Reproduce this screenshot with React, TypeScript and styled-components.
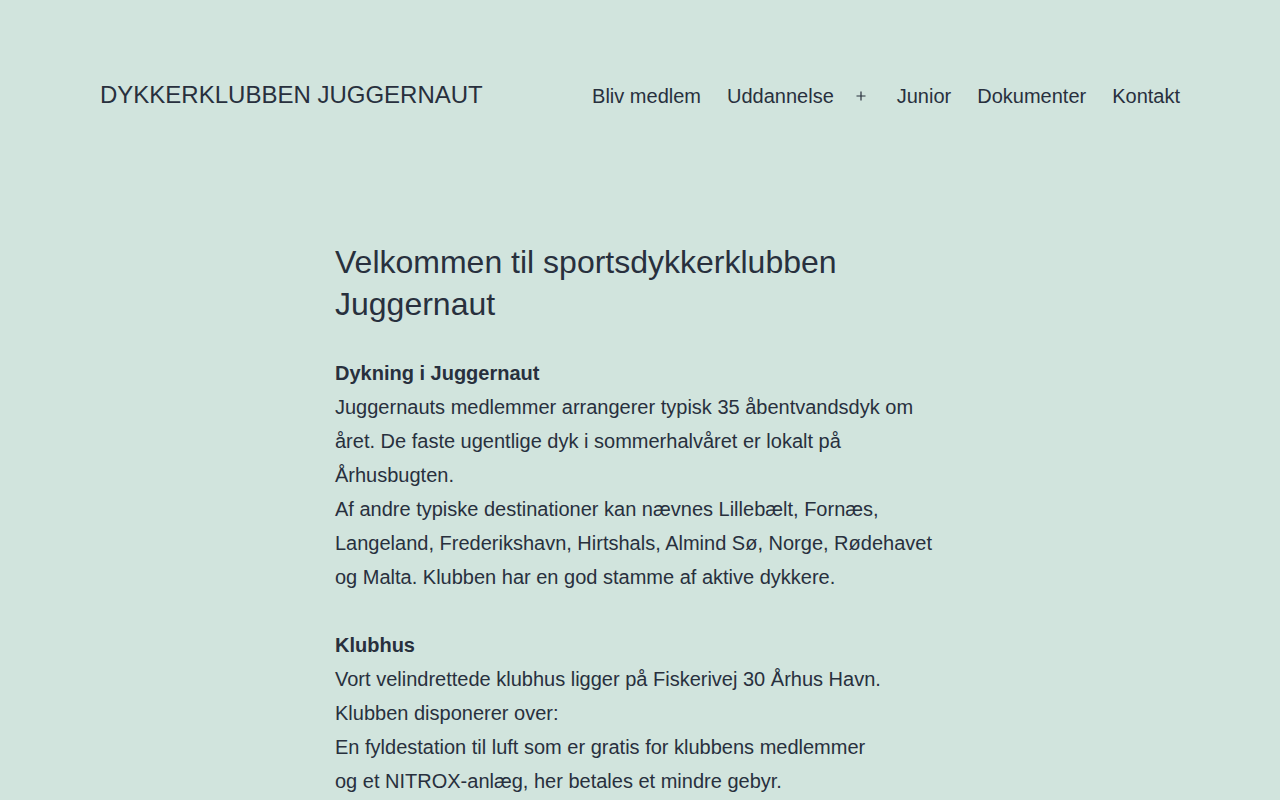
import styled, { createGlobalStyle } from "styled-components";

const GlobalStyle = createGlobalStyle`
  html, body {
    margin: 0;
    padding: 0;
    background-color: #d1e4dd;
  }
  body {
    color: #28303d;
    font-family: "Liberation Sans", Arial, sans-serif;
    -webkit-font-smoothing: antialiased;
  }
`;

const menu = ["Bliv medlem", "Uddannelse", "Junior", "Dokumenter", "Kontakt"];

function App() {
  return (
    <Site>
      <GlobalStyle />
      <Header>
        <SiteTitle>Dykkerklubben Juggernaut</SiteTitle>
        <Nav>
          <MenuList>
            {menu.map((item) => (
              <MenuItem key={item}>
                <MenuLink href="#">{item}</MenuLink>
                {item === "Uddannelse" && (
                  <SubToggle aria-label="Åbn menu">
                    <svg width="10" height="10" viewBox="0 0 10 10">
                      <path d="M5 0.5v9M0.5 5h9" stroke="#28303d" strokeWidth="1.2" fill="none" />
                    </svg>
                  </SubToggle>
                )}
              </MenuItem>
            ))}
          </MenuList>
        </Nav>
      </Header>

      <Main>
        <Title>Velkommen til sportsdykkerklubben Juggernaut</Title>
        <Text>
          <strong>Dykning i Juggernaut</strong>
          <br />
          Juggernauts medlemmer arrangerer typisk 35 åbentvandsdyk om året. De faste ugentlige dyk i
          sommerhalvåret er lokalt på Århusbugten.
          <br />
          Af andre typiske destinationer kan nævnes Lillebælt, Fornæs, Langeland, Frederikshavn,
          Hirtshals, Almind Sø, Norge, Rødehavet og Malta. Klubben har en god stamme af aktive dykkere.
          <br />
          <br />
          <strong>Klubhus</strong>
          <br />
          Vort velindrettede klubhus ligger på Fiskerivej 30 Århus Havn.
          <br />
          Klubben disponerer over:
          <br />
          En fyldestation til luft som er gratis for klubbens medlemmer
          <br />
          og et NITROX-anlæg, her betales et mindre gebyr.
        </Text>
      </Main>
    </Site>
  );
}

export default App;

const Site = styled.div`
  min-height: 800px;
  background-color: #d1e4dd;
`;

const Header = styled.header`
  display: flex;
  justify-content: space-between;
  align-items: center;
  max-width: 1080px;
  margin: 0 auto;
  padding-top: 72px;
  height: 48px;
`;

const SiteTitle = styled.p`
  margin: 0;
  font-size: 24px;
  line-height: 1.3;
  text-transform: uppercase;
  letter-spacing: normal;
  transform: translateY(-1px);
`;

const Nav = styled.nav`
  display: flex;
`;

const MenuList = styled.ul`
  display: flex;
  align-items: center;
  gap: 26px;
  margin: 0;
  padding: 0;
  list-style: none;
`;

const MenuItem = styled.li`
  display: flex;
  align-items: center;
`;

const MenuLink = styled.a`
  color: #28303d;
  font-size: 20px;
  line-height: 48px;
  text-decoration: none;
`;

const SubToggle = styled.button`
  display: flex;
  align-items: center;
  justify-content: center;
  width: 10px;
  height: 48px;
  margin-left: 22px;
  margin-right: 5px;
  padding: 0;
  border: 0;
  background: transparent;
  cursor: pointer;
`;

const Main = styled.main`
  max-width: 610px;
  margin: 0 auto;
  padding-top: 122px;
`;

const Title = styled.h1`
  margin: 0 0 31px;
  font-size: 32px;
  font-weight: 400;
  line-height: 1.3;
`;

const Text = styled.p`
  margin: 0;
  font-size: 20px;
  line-height: 34px;

  strong {
    font-weight: 700;
  }
`;
